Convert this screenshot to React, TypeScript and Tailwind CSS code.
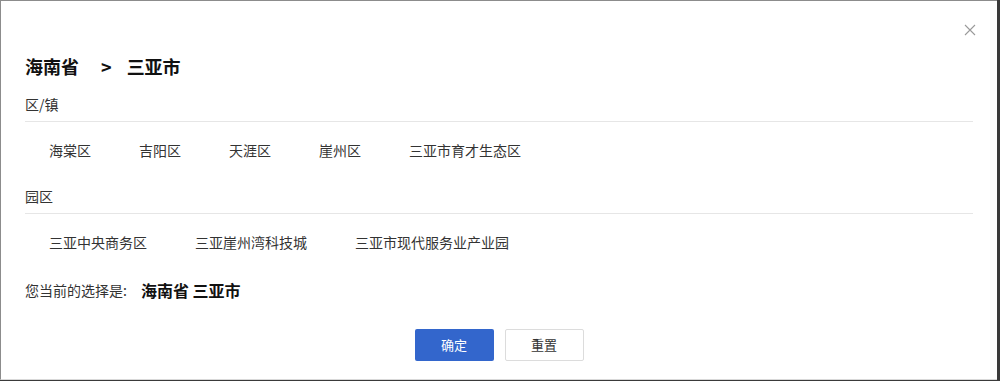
import React from "react";

const font = { fontFamily: '"Microsoft YaHei", "Noto Sans CJK SC", "Noto Sans", sans-serif' };

function Section({ label, items }: { label: string; items: string[] }) {
  return (
    <div>
      <div className="pt-[6px] pb-[5px] border-b border-[#e6e6e6] text-[14px] leading-[24px] text-[#333]">{label}</div>
      <div className="h-[56px] flex items-center">
        {items.map((it) => (
          <span key={it} className="px-[24px] text-[14px] leading-[20px] text-[#333] whitespace-nowrap">
            {it}
          </span>
        ))}
      </div>
    </div>
  );
}

export default function App() {
  return (
    <div className="w-[1000px] h-[381px] flex bg-[#3a3a3a] overflow-hidden" style={font}>
      <div className="relative w-[997px] h-[380px] bg-white border-t border-l border-[#8c8c8c] border-b border-b-[#d9d9d9]">
        <button className="absolute right-[21px] top-[23px] w-[12px] h-[12px] text-[#9a9a9a]" aria-label="close">
          <svg viewBox="0 0 12 12" width="12" height="12" fill="none" stroke="currentColor" strokeWidth="1.1">
            <path d="M1 1L11 11M11 1L1 11" />
          </svg>
        </button>
        <div className="px-[24px] pt-[52px]">
          <div className="h-[26px] flex items-center text-[18px] font-bold text-[#111] leading-[26px]">
            <span>海南省</span>
            <span className="ml-[22px] mr-[15px]">&gt;</span>
            <span>三亚市</span>
          </div>
          <div className="mt-[7px]">
            <Section label="区/镇" items={["海棠区", "吉阳区", "天涯区", "崖州区", "三亚市育才生态区"]} />
            <Section label="园区" items={["三亚中央商务区", "三亚崖州湾科技城", "三亚市现代服务业产业园"]} />
          </div>
          <div className="mt-[8px] h-[24px] flex items-center">
            <span className="text-[14px] text-[#333]">您当前的选择是:</span>
            <span className="ml-[14px] text-[16px] font-bold text-[#111]">海南省 三亚市</span>
          </div>
          <div className="mt-[27px] flex justify-center gap-[11px]">
            <button className="w-[79px] h-[32px] rounded-[2px] bg-[#3366cc] text-white text-[13px]">确定</button>
            <button className="w-[79px] h-[32px] rounded-[2px] bg-white border border-[#dcdcdc] text-[#333] text-[13px]">重置</button>
          </div>
        </div>
      </div>
    </div>
  );
}
